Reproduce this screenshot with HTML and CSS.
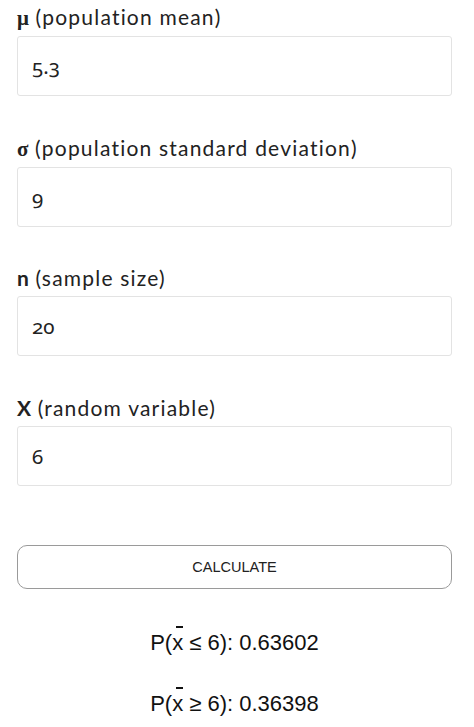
FILE: index.html
```html
<!DOCTYPE html>
<html>
<head>
<meta charset="utf-8">
<link rel="stylesheet" href="styles.css">
</head>
<body>
<div class="calc">
  <div class="field">
    <label class="lbl"><b class="greek">μ</b> (population mean)</label>
    <input class="box" type="text" value="5.3">
  </div>
  <div class="field">
    <label class="lbl"><b class="greek">σ</b> (population standard deviation)</label>
    <input class="box" type="text" value="9">
  </div>
  <div class="field">
    <label class="lbl"><b>n</b> (sample size)</label>
    <input class="box" type="text" value="20">
  </div>
  <div class="field">
    <label class="lbl"><b>X</b> (random variable)</label>
    <input class="box" type="text" value="6">
  </div>
  <button class="btn" type="button">CALCULATE</button>
  <p class="res first">P(<span class="xbar">x</span> ≤ 6): 0.63602</p>
  <p class="res">P(<span class="xbar">x</span> ≥ 6): 0.36398</p>
</div>
</body>
</html>
```
FILE: styles.css
```css
html, body {
  margin: 0;
  padding: 0;
  background: #ffffff;
}
.calc {
  padding: 0 22px 0 17px;
  color: #222222;
  font-family: Lato, "Open Sans", sans-serif;
}
.field {
  display: flex;
  flex-direction: column;
  margin-bottom: 34.7px;
}
.lbl {
  display: block;
  font-size: 21px;
  letter-spacing: 1.2px;
  line-height: 28px;
  padding-top: 3px;
  margin-bottom: 4px;
  color: #222;
}
.lbl b {
  font-weight: 700;
  letter-spacing: 0;
}
.greek {
  font-family: "Liberation Serif", serif;
}
.box {
  box-sizing: border-box;
  height: 60px;
  width: 100%;
  margin: 0;
  border: 1px solid #e3e3e3;
  border-radius: 3px;
  padding: 0 14px;
  font-family: "Noto Sans", "Open Sans", sans-serif;
  font-size: 20.5px;
  font-variant-numeric: oldstyle-nums;
  font-feature-settings: "onum" 1;
  color: #222;
  background: #fff;
  outline: none;
}
.btn {
  display: block;
  box-sizing: border-box;
  width: 100%;
  height: 44px;
  margin: 59px 0 0;
  border: 1px solid #9a9a9a;
  border-radius: 10px;
  background: #fff;
  font-family: "Liberation Sans", Arial, sans-serif;
  font-size: 14.5px;
  color: #222;
  padding: 0;
}
.res {
  margin: 31px 0 0;
  text-align: center;
  font-family: "Liberation Sans", Arial, sans-serif;
  font-size: 22px;
  line-height: 30px;
  color: #111;
}
.res.first {
  margin-top: 39px;
}
.xbar {
  position: relative;
}
.xbar::after {
  content: "";
  position: absolute;
  top: -4px;
  right: 0;
  width: 7px;
  height: 2px;
  background: #111;
}
```
